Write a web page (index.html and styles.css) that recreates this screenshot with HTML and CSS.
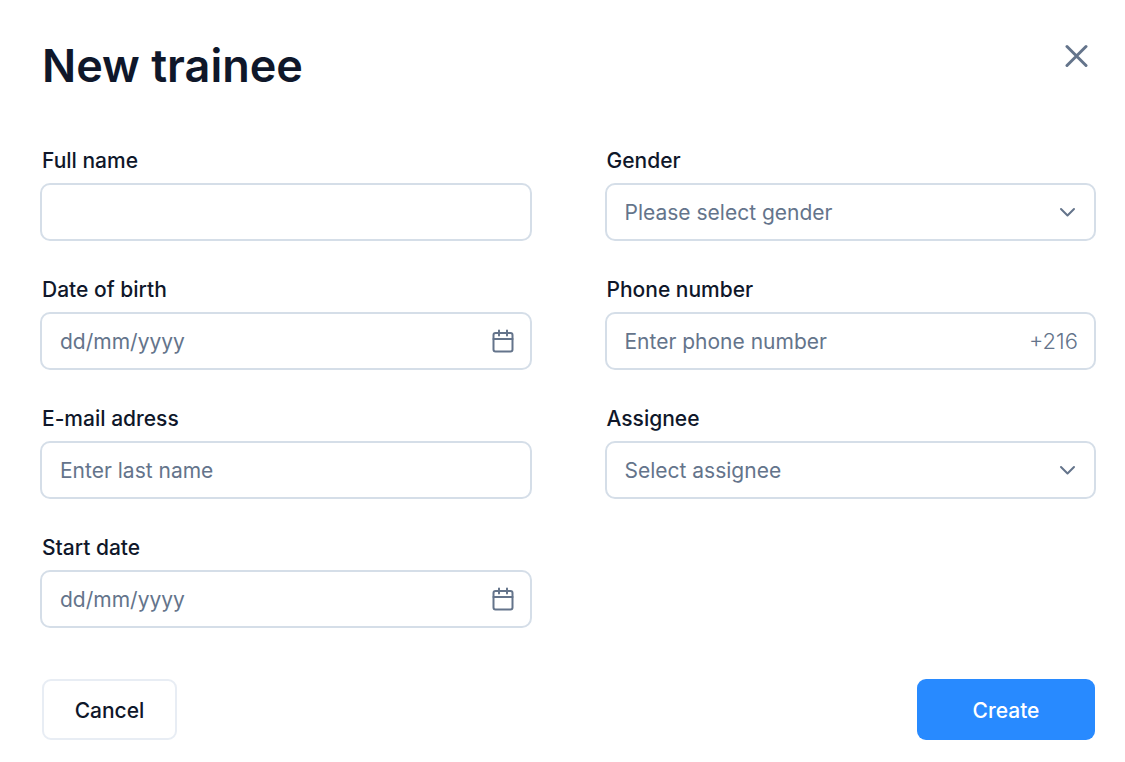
FILE: index.html
```html
<!DOCTYPE html>
<html lang="en">
<head>
<meta charset="utf-8">
<meta name="viewport" content="width=device-width, initial-scale=1">
<title>New trainee</title>
<link rel="stylesheet" href="styles.css">
</head>
<body>
<main class="dialog">
  <header class="dialog-header">
    <h1 class="title">New trainee</h1>
    <button class="close" type="button" aria-label="Close">
      <svg width="24" height="24" viewBox="0 0 24 24"><path d="M3 2.5l19 19M22 2.5L3 21.500"/></svg>
    </button>
  </header>
  <form class="form">
    <div class="columns">
      <div class="column">
        <div class="field">
          <label for="name">Full name</label>
          <div class="control"><input id="name" type="text"></div>
        </div>
        <div class="field">
          <label for="birth">Date of birth</label>
          <div class="control">
            <input id="birth" type="text" placeholder="dd/mm/yyyy">
            <svg class="calendar" width="24" height="24" viewBox="0 0 24 24"><rect x="2.500" y="4" width="19" height="18.500" rx="2"/><path d="M2.500 10h19M8 1.500v5M16 1.500v5"/></svg>
          </div>
        </div>
        <div class="field">
          <label for="email">E-mail adress</label>
          <div class="control"><input id="email" type="text" placeholder="Enter last name"></div>
        </div>
        <div class="field">
          <label for="start">Start date</label>
          <div class="control">
            <input id="start" type="text" placeholder="dd/mm/yyyy">
            <svg class="calendar" width="24" height="24" viewBox="0 0 24 24"><rect x="2.500" y="4" width="19" height="18.500" rx="2"/><path d="M2.500 10h19M8 1.500v5M16 1.500v5"/></svg>
          </div>
        </div>
      </div>
      <div class="column">
        <div class="field">
          <label for="gender">Gender</label>
          <div class="control">
            <select id="gender"><option>Please select gender</option></select>
            <svg class="chevron" width="18" height="18" viewBox="0 0 18 18"><path d="M3 6l6.500 6.500L16 6"/></svg>
          </div>
        </div>
        <div class="field">
          <label for="phone">Phone number</label>
          <div class="control">
            <input id="phone" type="tel" placeholder="Enter phone number">
            <span class="prefix">+216</span>
          </div>
        </div>
        <div class="field">
          <label for="assignee">Assignee</label>
          <div class="control">
            <select id="assignee"><option>Select assignee</option></select>
            <svg class="chevron" width="18" height="18" viewBox="0 0 18 18"><path d="M3 6l6.500 6.500L16 6"/></svg>
          </div>
        </div>
      </div>
    </div>
    <footer class="actions">
      <button class="button cancel" type="button">Cancel</button>
      <button class="button create" type="submit">Create</button>
    </footer>
  </form>
</main>
</body>
</html>
```
FILE: styles.css
```css
* { box-sizing: border-box; }
body {
  margin: 0;
  background: #fff;
  color: #0f172a;
  font-family: Inter, "Liberation Sans", sans-serif;
  font-size: 21px;
}
.dialog { padding: 36px 29px 20px 40px; }
.dialog-header {
  display: flex;
  justify-content: space-between;
  align-items: flex-start;
  padding: 0 4px 0 2px;
}
.title { margin: 0; font-size: 45px; line-height: 60px; font-weight: 600; }
.close {
  display: flex;
  margin-top: 4px;
  padding: 4px;
  border: 0;
  background: none;
}
svg { flex: none; fill: none; stroke: #64748b; stroke-width: 2; stroke-linecap: round; stroke-linejoin: round; }
.close svg { stroke-width: 3; }
.form { margin-top: 50px; }
.columns { display: grid; grid-template-columns: 1fr 1fr; gap: 73px; }
.column { display: flex; flex-direction: column; gap: 34px; }
.field { display: flex; flex-direction: column; gap: 7px; }
label { padding-left: 2px; line-height: 30px; font-weight: 500; }
.control { position: relative; display: flex; align-items: center; }
input, select {
  width: 100%;
  height: 58px;
  padding: 0 56px 0 18px;
  border: 2px solid #d5dee8;
  border-radius: 10px;
  background: #fff;
  color: #64748b;
  font: inherit;
  appearance: none;
}
input::placeholder { color: #64748b; opacity: 1; }
.calendar, .chevron, .prefix { position: absolute; pointer-events: none; }
.calendar { right: 17px; }
.chevron { right: 20px; }
.prefix { right: 18px; color: #64748b; font-size: 22px; font-weight: 300; }
.actions { display: flex; justify-content: space-between; margin-top: 51px; padding: 0 1px 0 2px; }
.button { height: 61px; padding: 2px 0 0; border-radius: 9px; font: inherit; font-weight: 500; }
.cancel { width: 135px; border: 2px solid #e8edf4; background: #fff; color: #0f172a; }
.create { width: 178px; border: 0; background: #288aff; color: #fff; }
```
